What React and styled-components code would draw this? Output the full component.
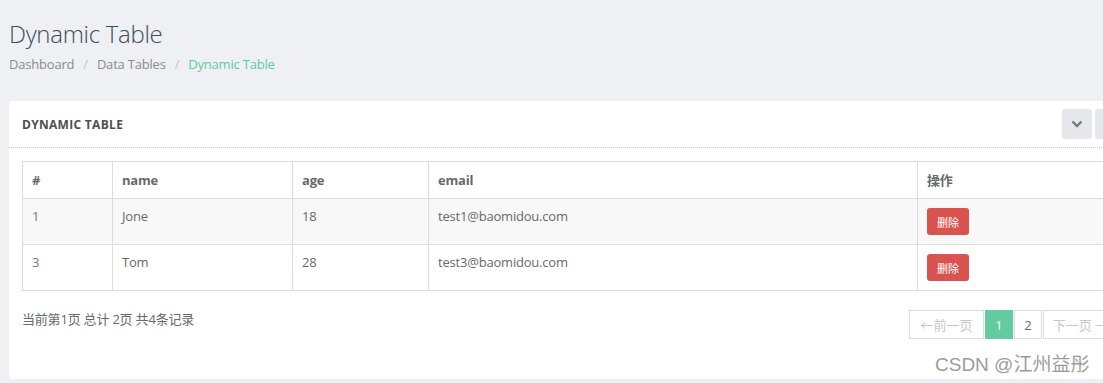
import React from "react";
import styled, { createGlobalStyle } from "styled-components";

const Global = createGlobalStyle`
  html, body { margin: 0; padding: 0; }
  body {
    background: #eef0f4;
    font-family: "Open Sans", "Noto Sans CJK SC", sans-serif;
    color: #676a6c;
    overflow: hidden;
    width: 1103px;
    height: 383px;
  }
`;

const Page = styled.div`
  position: relative;
  padding: 0 0 0 9px;
  width: 1140px;
`;

const Heading = styled.div`
  padding-top: 18px;
  height: 101px;
  box-sizing: border-box;
`;

const Title = styled.h2`
  margin: 0;
  font-size: 24px;
  font-weight: 300;
  line-height: 32px;
  color: #3e4d5c;
  letter-spacing: -0.3px;
`;

const Crumbs = styled.ol`
  list-style: none;
  margin: 5px 0 0;
  padding: 0;
  display: flex;
  font-size: 13px;
  line-height: 18px;
  letter-spacing: -0.2px;
`;

const Crumb = styled.li`
  color: ${(p) => (p.$active ? "#5ccb9f" : "#8a8c8e")};
  &:not(:first-child)::before {
    content: "/";
    color: #c2c4c6;
    padding: 0 9px 0 9px;
  }
`;

const Card = styled.section`
  background: #fff;
  border-radius: 4px;
  width: 1131px;
  height: 278px;
`;

const CardHead = styled.header`
  height: 46px;
  display: flex;
  align-items: center;
  justify-content: space-between;
  padding: 0 0 0 13px;
  border-bottom: 1px dotted #c9cbcd;
`;

const CardTitle = styled.h5`
  margin: 0;
  font-size: 12px;
  font-weight: 700;
  color: #4e4f51;
  text-transform: uppercase;
  letter-spacing: 0.3px;
`;

const Tools = styled.div`
  display: flex;
  gap: 3px;
  margin-right: 15px;
`;

const ToolBtn = styled.button`
  width: 30px;
  height: 30px;
  border: none;
  border-radius: 3px;
  background: #e6e7ea;
  display: flex;
  align-items: center;
  justify-content: center;
  padding: 0;
  color: #7a7c7f;
`;

const CardBody = styled.div`
  padding: 13px 13px 0;
`;

const Table = styled.table`
  border-collapse: collapse;
  width: 1105px;
  font-size: 13px;
  letter-spacing: -0.2px;
  table-layout: fixed;
`;

const Th = styled.th`
  text-align: left;
  font-weight: 700;
  color: #676a6c;
  border: 1px solid #dcdcdc;
  padding: 8px 9px;
  height: 37px;
  box-sizing: border-box;
  line-height: 18px;
  width: ${(p) => p.$w || "auto"};
`;

const Tr = styled.tr`
  background: ${(p) => (p.$striped ? "#f8f8f8" : "#fff")};
`;

const Td = styled.td`
  border: 1px solid #dcdcdc;
  padding: 8px 9px;
  vertical-align: top;
  height: 46px;
  box-sizing: border-box;
  line-height: 18px;
  color: ${(p) => (p.$first ? "#6a7a8e" : "#676a6c")};
`;

const DelBtn = styled.button`
  margin-top: 1px;
  border: none;
  border-radius: 3px;
  background: #d9534f;
  color: #fff;
  font-family: "Noto Sans CJK SC", sans-serif;
  font-size: 11px;
  width: 42px;
  height: 27px;
  padding: 0;
`;

const Footer = styled.div`
  display: flex;
  justify-content: space-between;
  align-items: flex-start;
  padding-top: 19px;
`;

const Info = styled.div`
  font-size: 13px;
  line-height: 18px;
  letter-spacing: -0.2px;
  color: #676a6c;
`;

const Pager = styled.ul`
  list-style: none;
  display: flex;
  gap: 1px;
  margin: 0 9px 0 0;
  padding: 0;
`;

const PageItem = styled.li`
  flex: none;
  height: 29px;
  box-sizing: border-box;
  border: 1px solid ${(p) => (p.$active ? "#62cb9f" : "#dddddd")};
  background: ${(p) => (p.$active ? "#62cb9f" : "#fff")};
  color: ${(p) => (p.$active ? "#fff" : p.$disabled ? "#c8c8c8" : "#666")};
  font-size: 13px;
  display: flex;
  align-items: center;
  justify-content: center;
  width: ${(p) => p.$w};
  white-space: nowrap;
`;

const Watermark = styled.div`
  position: absolute;
  left: 935px;
  top: 349px;
  font-family: "Liberation Sans", "Noto Sans CJK SC", sans-serif;
  font-size: 19px;
  color: rgba(120, 120, 120, 0.75);
  white-space: nowrap;
`;

const rows = [
  { id: 1, name: "Jone", age: 18, email: "test1@baomidou.com" },
  { id: 3, name: "Tom", age: 28, email: "test3@baomidou.com" },
];

export default function App() {
  return (
    <>
      <Global />
      <Page>
        <Heading>
          <Title>Dynamic Table</Title>
          <Crumbs>
            <Crumb>Dashboard</Crumb>
            <Crumb>Data Tables</Crumb>
            <Crumb $active>Dynamic Table</Crumb>
          </Crumbs>
        </Heading>
        <Card>
          <CardHead>
            <CardTitle>Dynamic Table</CardTitle>
            <Tools>
              <ToolBtn>
                <svg width="12" height="8" viewBox="0 0 12 8">
                  <path d="M1.5 1.5 L6 6 L10.5 1.5" fill="none" stroke="#777a7e" strokeWidth="2.4" />
                </svg>
              </ToolBtn>
              <ToolBtn />
            </Tools>
          </CardHead>
          <CardBody>
            <Table>
              <thead>
                <tr>
                  <Th $w="90px">#</Th>
                  <Th $w="180px">name</Th>
                  <Th $w="136px">age</Th>
                  <Th $w="489px">email</Th>
                  <Th>操作</Th>
                </tr>
              </thead>
              <tbody>
                {rows.map((r, i) => (
                  <Tr key={r.id} $striped={i % 2 === 0}>
                    <Td $first>{r.id}</Td>
                    <Td>{r.name}</Td>
                    <Td>{r.age}</Td>
                    <Td>{r.email}</Td>
                    <Td>
                      <DelBtn>删除</DelBtn>
                    </Td>
                  </Tr>
                ))}
              </tbody>
            </Table>
            <Footer>
              <Info>当前第1页 总计 2页 共4条记录</Info>
              <Pager>
                <PageItem $disabled $w="75px">←前一页</PageItem>
                <PageItem $active $w="28px">1</PageItem>
                <PageItem $w="28px">2</PageItem>
                <PageItem $disabled $w="75px">下一页 →</PageItem>
              </Pager>
            </Footer>
          </CardBody>
        </Card>
        <Watermark>CSDN @江州益彤</Watermark>
      </Page>
    </>
  );
}
